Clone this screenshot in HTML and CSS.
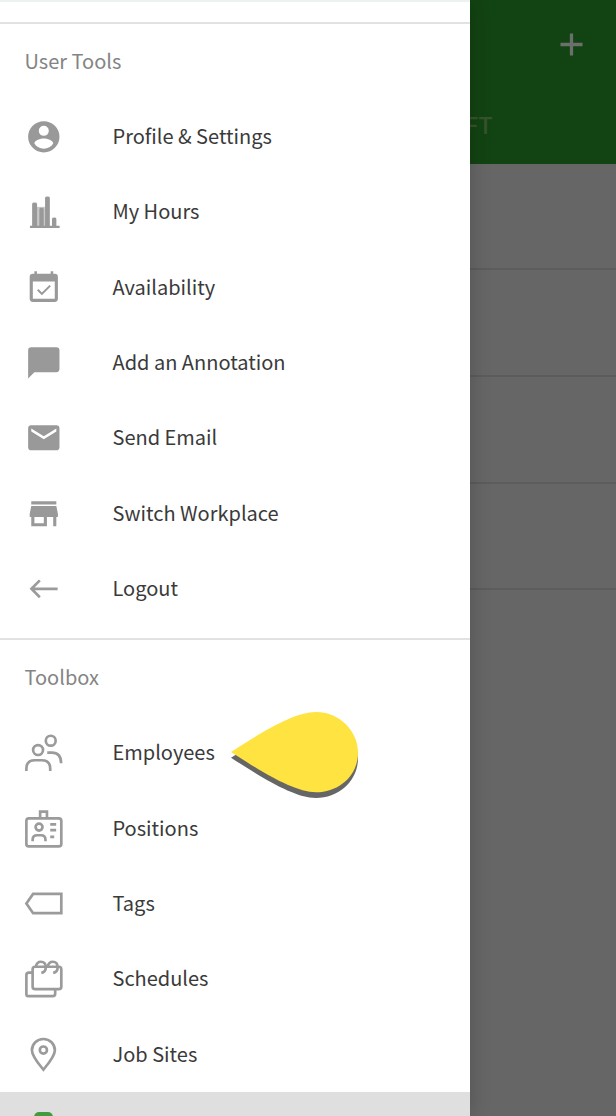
FILE: index.html
```html
<!DOCTYPE html>
<html lang="en">
<head>
<meta charset="utf-8">
<title>User Tools</title>
<link rel="stylesheet" href="styles.css">
</head>
<body>
<div class="app">
  <main class="page">
    <header class="toolbar">
      <svg class="plus" viewBox="0 0 24 24"><path d="M12 0.5V23.5M0.5 12H23.5"/></svg>
      <div class="tab">FT</div>
    </header>
    <div class="line first"></div>
    <div class="line"></div>
    <div class="line"></div>
    <div class="line last"></div>
  </main>

  <aside class="drawer">
    <div class="top-edge"></div>
    <section class="group">
      <h2 class="heading">User Tools</h2>
      <a class="item"><svg class="icon solid" viewBox="0 0 24 24"><path d="M12 2a10 10 0 1 0 0 20 10 10 0 0 0 0-20zm0 3a3.2 3.2 0 1 1 0 6.400 3.200 3.200 0 0 1 0-6.400zm0 14.600c-2.500 0-4.800-1.300-6-3.300 0-2.100 4-3.200 6-3.200s6 1.100 6 3.200c-1.200 2-3.500 3.300-6 3.300z"/></svg><span class="label">Profile &amp; Settings</span></a>
      <a class="item"><svg class="icon solid" viewBox="0 0 38 38"><path class="pale" d="M12 14h11v20H12z"/><path d="M5 33h30v2.300H5zM7.200 11q0-1.500 2.500-1.500t2.500 1.500v23h-5zM14.500 16.500q0-1.500 2.200-1.500t2.200 1.500V34h-4.400zM20.300 4.800q0-1.300 2.400-1.300t2.400 1.300V34h-4.800zM27.300 26q0-1.200 2.200-1.200t2.200 1.200v8h-4.400z"/></svg><span class="label">My Hours</span></a>
      <a class="item"><svg class="icon solid" viewBox="0 0 24 24"><path d="M16.530 11.060l-.9-.9-4.840 4.840-2.190-2.190-.9.900L10.790 16.800l5.740-5.740zM19 3h-1V1.500h-1.600V3H7.600V1.500H6V3H5a2 2 0 0 0-2 2v14a2 2 0 0 0 2 2h14a2 2 0 0 0 2-2V5a2 2 0 0 0-2-2zm0 16H5V8h14z"/></svg><span class="label">Availability</span></a>
      <a class="item"><svg class="icon solid" viewBox="0 0 24 24"><path d="M20 2H4a2 2 0 0 0-2 2v18l4-4h14a2 2 0 0 0 2-2V4a2 2 0 0 0-2-2z"/></svg><span class="label">Add an Annotation</span></a>
      <a class="item"><svg class="icon solid" viewBox="0 0 24 24"><path d="M20 4H4a2 2 0 0 0-2 2v12a2 2 0 0 0 2 2h16a2 2 0 0 0 2-2V6a2 2 0 0 0-2-2zm0 4l-8 5-8-5V6l8 5 8-5z"/></svg><span class="label">Send Email</span></a>
      <a class="item"><svg class="icon solid" viewBox="0 0 24 24"><path d="M20 4H4v2h16zm1 10v-2l-1-5H4l-1 5v2h1v6h10v-6h4v6h2v-6zm-9 4H6v-4h6z"/></svg><span class="label">Switch Workplace</span></a>
      <a class="item"><svg class="icon stroke" viewBox="0 0 38 38"><path d="M33 19H6.500M15 10.500L6.500 19l8.500 8.500"/></svg><span class="label">Logout</span></a>
    </section>

    <section class="group">
      <h2 class="heading">Toolbox</h2>
      <a class="item"><svg class="icon stroke" viewBox="0 0 38 38"><circle cx="13.200" cy="16.200" r="5"/><circle cx="26" cy="6.800" r="5"/><path d="M1.400 37.500v-2.500q0-8.500 8.500-8.500h7.100q8.500 0 8.500 8.500v2.500M22.500 18.800h4.500q9.500 0 9.500 10.800"/></svg><span class="label">Employees</span>
        <svg class="pointer" viewBox="0 0 130 88"><path class="shadow" d="M1 45.700C24 31 62 5.700 86 5.700c23 0 42 18 42 40.500S109 86 86 86C64 86 32 65.700 1 45.700z"/><path class="drop" d="M1 40C32 20 64 0 86 0c23 0 42 18.500 42 41S109 80.300 86 80.300C64 80.300 32 60 1 40z"/></svg>
      </a>
      <a class="item"><svg class="icon stroke" viewBox="0 0 38 38"><rect x="1.400" y="8.500" width="35.300" height="28.300" rx="2.500"/><path d="M15.300 9V1.700h6.900V9"/><circle cx="14.200" cy="17.300" r="3.500"/><path d="M7.700 31.500v-1.300q0-4.700 4.500-4.700h4q4.500 0 4.500 4.700v1.300M25.500 14.500h6M25.500 20.300h6M25.500 27.200h4"/></svg><span class="label">Positions</span></a>
      <a class="item"><svg class="icon stroke" viewBox="0 0 38 38"><path d="M1.400 18.800L8.200 9H36.700v19.500H8.200z"/></svg><span class="label">Tags</span></a>
      <a class="item"><svg class="icon stroke" viewBox="0 0 38 38"><rect x="7.700" y="6.800" width="29" height="22.700" rx="2.500"/><path d="M8 12.800H4q-2.600 0-2.600 2.300V34.500q0 2 2 2H28q2.500 0 2.500-2.500v-4M11 6.500q1-4.700 5-4.700 5 0 5 5.500 0 5-4.500 5.700M23 6.500q1-4.700 5-4.700 5 0 5 5.500 0 5-4.500 5.700"/></svg><span class="label">Schedules</span></a>
      <a class="item"><svg class="icon stroke" viewBox="0 0 38 38"><path d="M18.600 34C15 29.500 7 20.500 7 14.300a11.600 11.300 0 0 1 23.200 0C30.200 20.500 22.200 29.500 18.600 34z"/><circle cx="18.600" cy="14.200" r="3.600"/></svg><span class="label">Job Sites</span></a>
    </section>
    <div class="selected"><div class="badge"></div></div>
  </aside>
</div>
</body>
</html>
```
FILE: styles.css
```css
body {
  margin: 0;
  font-family: "Noto Sans CJK SC", "Noto Sans", sans-serif;
}

.app {
  position: relative;
  width: 616px;
  height: 1116px;
  overflow: hidden;
}

.page {
  height: 100%;
  background: #666;
}

.toolbar {
  display: flex;
  flex-direction: column;
  box-sizing: border-box;
  height: 164px;
  padding: 33px 33px 0 0;
  background: #124312;
}

.plus {
  align-self: flex-end;
  width: 23px;
  height: 23px;
  fill: none;
  stroke: #6c706c;
  stroke-width: 3.400;
}

.tab {
  padding: 58px 0 0 465.500px;
  font: 500 23px/26px Roboto, sans-serif;
  color: #35532f;
}

.line {
  height: 105px;
  border-bottom: 2px solid #5c5c5c;
}

.first {
  height: 104px;
}

.last {
  height: 104px;
}

.drawer {
  position: absolute;
  top: 0;
  left: 0;
  width: 470px;
  height: 1116px;
  background: #fff;
  box-shadow: 0 0 20px rgba(0, 0, 0, 0.2);
}

.top-edge {
  height: 22px;
  box-sizing: border-box;
  border-top: 2px solid #edf1f0;
}

.group {
  border-top: 2px solid #e2e2e2;
  padding-bottom: 12px;
}

.group + .group {
  padding-bottom: 0;
}

.heading {
  margin: 0;
  padding-left: 24.500px;
  height: 75.100px;
  font-size: 20px;
  font-weight: 400;
  line-height: 73px;
  color: #848484;
}

.item {
  position: relative;
  display: flex;
  align-items: center;
  height: 75.330px;
  padding-left: 24.600px;
}

.icon {
  flex: none;
  width: 37.600px;
  height: 37.600px;
  margin-right: 50.300px;
  overflow: visible;
}

.solid {
  fill: #999;
}

.pale {
  fill: #c8c8c8;
}

.stroke {
  fill: none;
  stroke: #9b9b9b;
  stroke-width: 2.700;
}

.label {
  padding-bottom: 1.600px;
  font-size: 20px;
  font-weight: 400;
  line-height: 30px;
  color: #3a3a3a;
  white-space: nowrap;
}

.pointer {
  position: absolute;
  top: -3.500px;
  left: 229.500px;
  width: 130px;
  height: 88px;
}

.shadow {
  fill: #666;
}

.drop {
  fill: #ffe341;
}

.selected {
  display: flow-root;
  height: 24px;
  overflow: hidden;
  background: #dfdfdf;
}

.badge {
  width: 19px;
  height: 20px;
  margin: 20px 0 0 34px;
  border-radius: 5px;
  background: #439b40;
}
```
